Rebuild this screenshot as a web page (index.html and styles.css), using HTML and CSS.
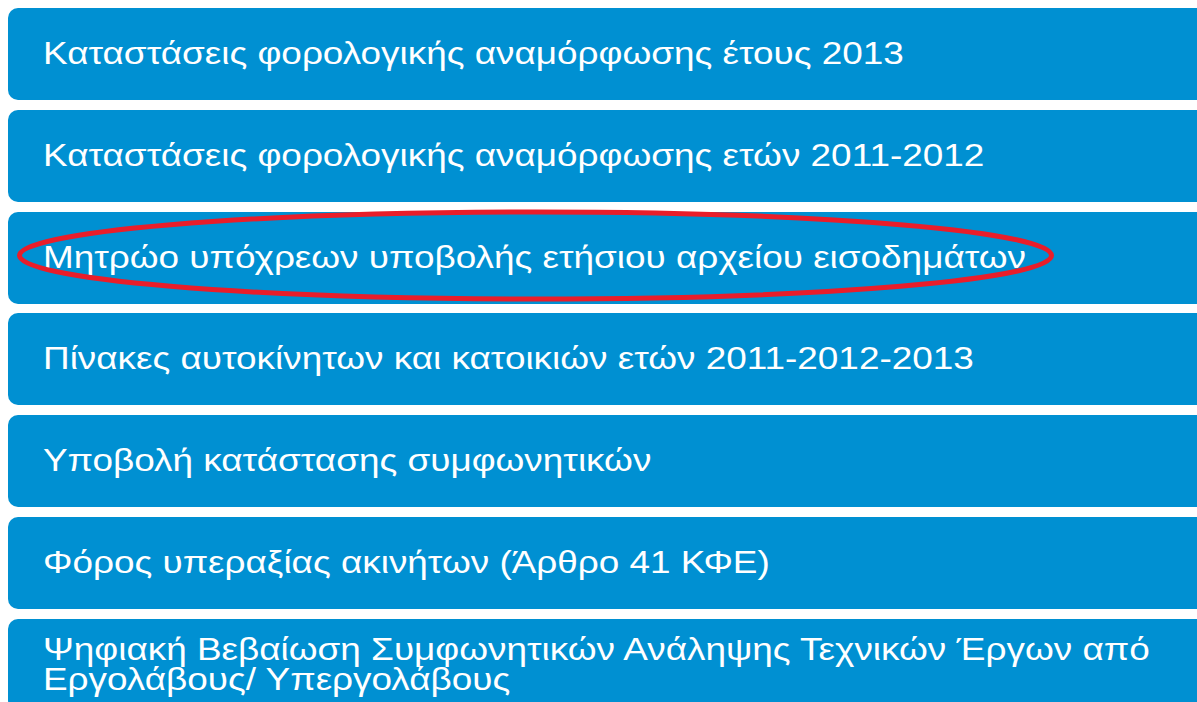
FILE: index.html
```html
<!DOCTYPE html>
<html lang="el">
<head>
<meta charset="utf-8">
<title>Υπηρεσίες</title>
<link rel="stylesheet" href="styles.css">
</head>
<body>
<ul class="menu">
  <li class="menu-item"><span class="label">Καταστάσεις φορολογικής αναμόρφωσης έτους 2013</span></li>
  <li class="menu-item"><span class="label">Καταστάσεις φορολογικής αναμόρφωσης ετών 2011-2012</span></li>
  <li class="menu-item marked"><span class="label">Μητρώο υπόχρεων υποβολής ετήσιου αρχείου εισοδημάτων</span>
    <svg class="ring" width="1045" height="97" viewBox="0 0 1045 97">
      <ellipse cx="522.5" cy="48.5" rx="516" ry="43.5" fill="none" stroke="#e91d2a" stroke-width="5"/>
    </svg>
  </li>
  <li class="menu-item"><span class="label">Πίνακες αυτοκίνητων και κατοικιών ετών 2011-2012-2013</span></li>
  <li class="menu-item"><span class="label">Υποβολή κατάστασης συμφωνητικών</span></li>
  <li class="menu-item"><span class="label">Φόρος υπεραξίας ακινήτων (Άρθρο 41 ΚΦΕ)</span></li>
  <li class="menu-item multi"><span class="label wrap">Ψηφιακή Βεβαίωση Συμφωνητικών Ανάληψης Τεχνικών Έργων από Εργολάβους/ Υπεργολάβους</span></li>
</ul>
</body>
</html>
```

FILE: styles.css
```css
html, body {
  margin: 0;
  padding: 0;
  background: #ffffff;
  overflow: hidden;
}

.menu {
  list-style: none;
  margin: 0;
  padding: 8px 0 0 8px;
  display: flex;
  flex-direction: column;
  gap: 9.83px;
  width: 1220px;
}

.menu-item {
  position: relative;
  box-sizing: border-box;
  height: 92px;
  display: flex;
  align-items: center;
  padding: 0 0 0 35px;
  background: #0090d2;
  border-radius: 10px;
  color: #ffffff;
  font-family: "Liberation Sans", Arial, sans-serif;
  font-size: 31px;
  line-height: 28px;
}

/* the label face is drawn wide */
.label {
  display: inline-block;
  white-space: nowrap;
  transform: scaleX(1.19);
  transform-origin: left center;
}

.menu-item.multi {
  align-items: flex-start;
  padding-top: 16px;
}

.label.wrap {
  white-space: normal;
  width: 960px;
  line-height: 30px;
  transform-origin: left top;
}

.ring {
  position: absolute;
  left: 5px;
  top: -5px;
  pointer-events: none;
}
```
